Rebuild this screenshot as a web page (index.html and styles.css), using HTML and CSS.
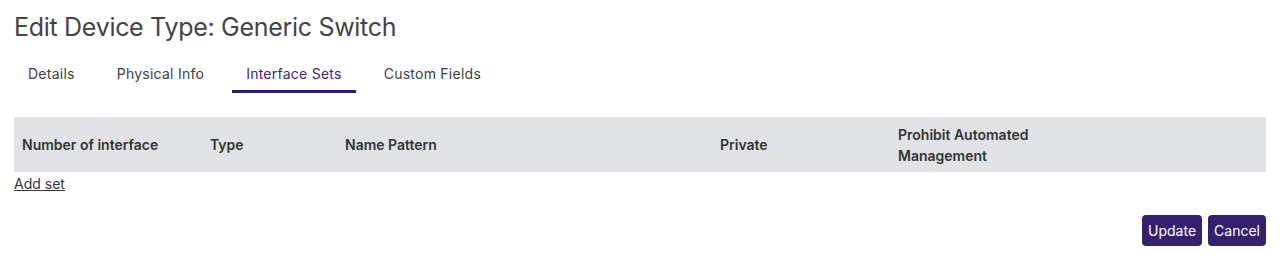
FILE: index.html
```html
<!DOCTYPE html>
<html>
<head>
<meta charset="utf-8">
<link rel="stylesheet" href="styles.css">
</head>
<body>
<div class="page">
  <h1 class="title">Edit Device Type: Generic Switch</h1>
  <nav class="tabs">
    <span class="tab">Details</span>
    <span class="tab">Physical Info</span>
    <span class="tab active">Interface Sets</span>
    <span class="tab">Custom Fields</span>
  </nav>
  <table class="sets">
    <thead>
      <tr>
        <th class="c1">Number of interface</th>
        <th class="c2">Type</th>
        <th class="c3">Name Pattern</th>
        <th class="c4">Private</th>
        <th class="c5"><span class="wrap">Prohibit Automated Management</span></th>
      </tr>
    </thead>
  </table>
  <a class="add" href="#">Add set</a>
  <div class="actions">
    <button class="btn">Update</button>
    <button class="btn">Cancel</button>
  </div>
</div>
</body>
</html>
```

FILE: styles.css
```css
html, body { margin: 0; padding: 0; background: #fff; }
body { font-family: Inter, "Open Sans", sans-serif; color: #3b3b3b; }
.page { padding: 0 14px; }
.title {
  margin: 0;
  padding-top: 11px;
  font-size: 25px;
  font-weight: 400;
  line-height: 32px;
  color: #444;
  letter-spacing: -0.3px;
}
.tabs {
  display: flex;
  margin-top: 17px;
  height: 33px;
}
.tab {
  font-size: 14px;
  line-height: 22px;
  padding: 3px 14px 0;
  margin-right: 14px;
  color: #3e3e3e;
  box-sizing: border-box;
  height: 33px;
  letter-spacing: 0.25px;
}
.tab.active {
  color: #3a2878;
  border-bottom: 3px solid #2f1d6b;
}
.sets {
  margin-top: 24px;
  width: 100%;
  border-collapse: collapse;
  background: #e1e2e6;
}
.sets th {
  text-align: left;
  font-size: 14px;
  font-weight: 600;
  color: #333;
  height: 55px;
  padding: 0 0 0 8px;
  line-height: 21px;
  vertical-align: middle;
}
.c1 { width: 180px; }
.c2 { width: 127px; }
.c3 { width: 367px; }
.c4 { width: 170px; }
.wrap { display: block; width: 150px; }
.add {
  display: inline-block;
  margin-top: 3px;
  font-size: 14px;
  line-height: 18px;
  color: #333;
  text-decoration: underline;
}
.actions {
  display: flex;
  justify-content: flex-end;
  gap: 6px;
  margin-top: 22px;
}
.btn {
  font-family: inherit;
  background: #35206e;
  color: #fff;
  border: none;
  border-radius: 4px;
  height: 31px;
  padding: 0 6px;
  font-size: 14px;
}
```
